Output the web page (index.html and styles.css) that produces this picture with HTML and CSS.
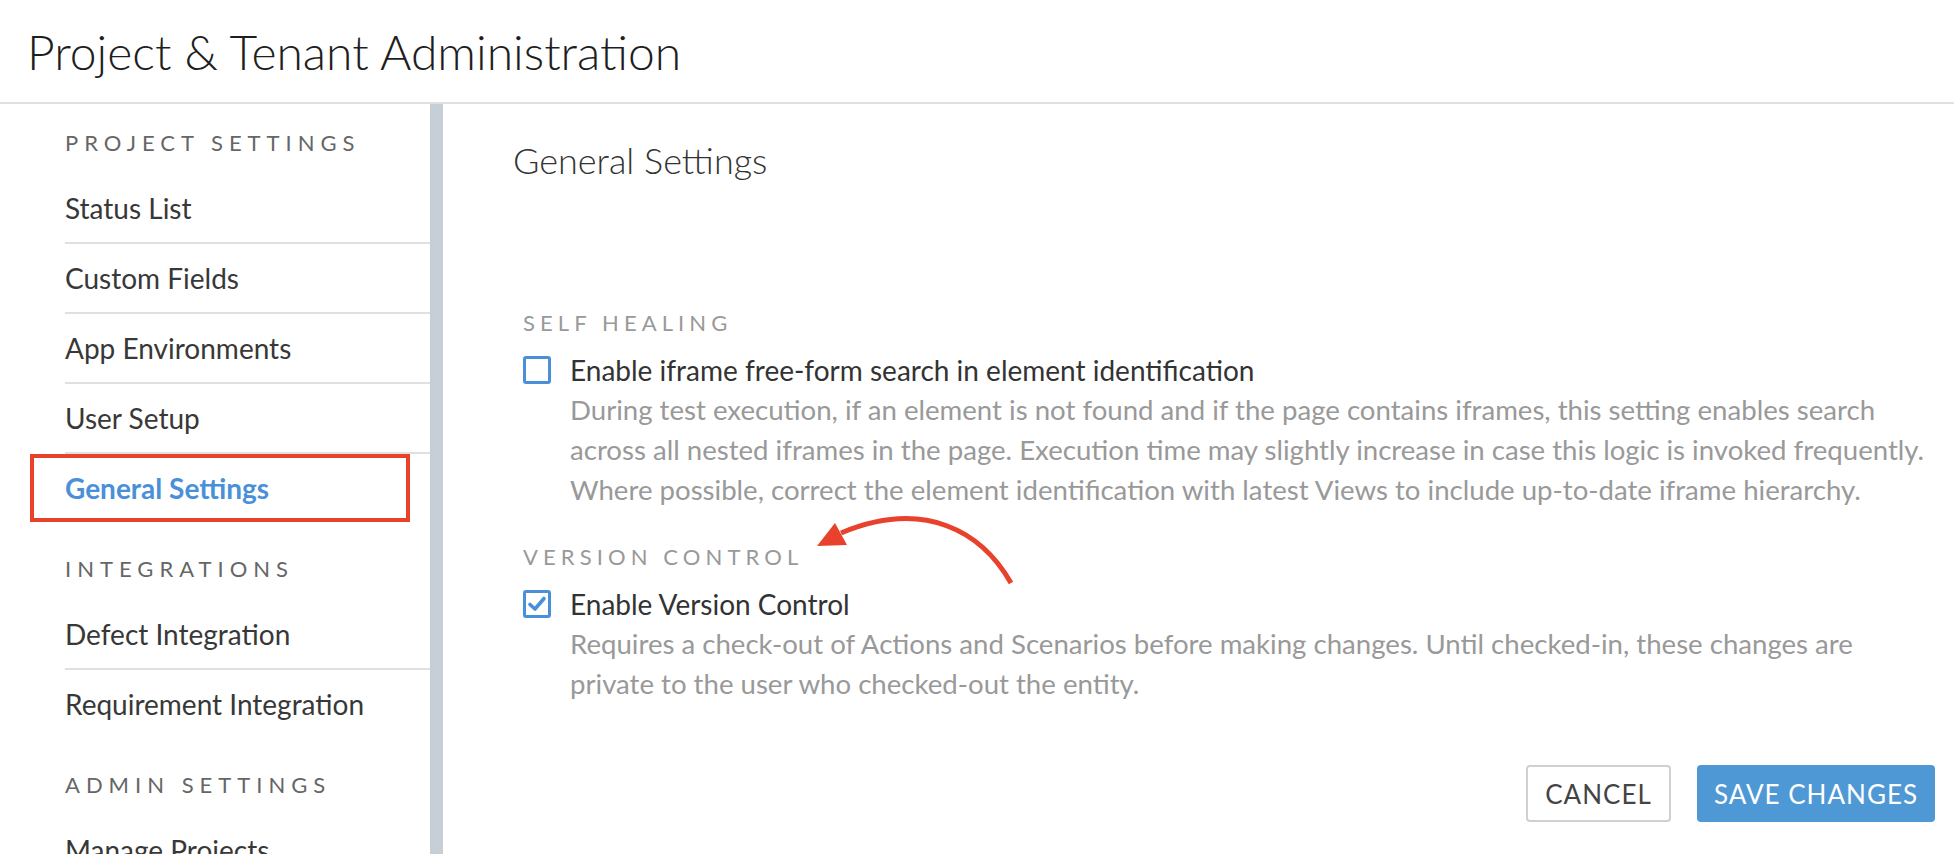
FILE: index.html
```html
<!DOCTYPE html>
<html lang="en">
<head>
  <meta charset="UTF-8">
  <title>Project &amp; Tenant Administration</title>
  <link rel="stylesheet" href="styles.css">
</head>
<body>
  <header class="page-header">
    <h1>Project &amp; Tenant Administration</h1>
  </header>

  <div class="layout">
    <aside class="sidebar">
      <div class="group">
        <div class="group-title">PROJECT SETTINGS</div>
        <a class="side-item" href="#status">Status List</a>
        <a class="side-item" href="#fields">Custom Fields</a>
        <a class="side-item" href="#env">App Environments</a>
        <a class="side-item" href="#users">User Setup</a>
        <a class="side-item active" href="#general">General Settings</a>
      </div>
      <div class="group">
        <div class="group-title">INTEGRATIONS</div>
        <a class="side-item" href="#defect">Defect Integration</a>
        <a class="side-item" href="#req">Requirement Integration</a>
      </div>
      <div class="group">
        <div class="group-title">ADMIN SETTINGS</div>
        <a class="side-item" href="#projects">Manage Projects</a>
      </div>
    </aside>

    <main class="content">
      <h2>General Settings</h2>

      <section class="setting first">
        <div class="setting-title">SELF HEALING</div>
        <label class="check-row">
          <span class="checkbox"></span>
          <span class="check-label">Enable iframe free-form search in element identification</span>
        </label>
        <p class="desc">During test execution, if an element is not found and if the page contains iframes, this setting enables search across all nested iframes in the page. Execution time may slightly increase in case this logic is invoked frequently. Where possible, correct the element identification with latest Views to include up-to-date iframe hierarchy.</p>
      </section>

      <section class="setting">
        <div class="setting-title">VERSION CONTROL</div>
        <label class="check-row">
          <span class="checkbox checked">
            <svg viewBox="0 0 20 20" width="20" height="20"><path d="M3 10.5 L8 15 L17 4.5" fill="none" stroke="#4a90d9" stroke-width="3.6" stroke-linecap="round" stroke-linejoin="round"/></svg>
          </span>
          <span class="check-label">Enable Version Control</span>
        </label>
        <p class="desc">Requires a check-out of Actions and Scenarios before making changes. Until checked-in, these changes are private to the user who checked-out the entity.</p>
      </section>

      <div class="actions">
        <button class="btn btn-cancel">CANCEL</button>
        <button class="btn btn-save">SAVE CHANGES</button>
      </div>

      <!-- annotation arrow -->
      <svg class="arrow" viewBox="813 514 210 80" width="210" height="80">
        <path d="M1011 583 C 982 532, 925 498, 841 533" fill="none" stroke="#e8412c" stroke-width="5"/>
        <polygon points="835,523 817,546 847,545" fill="#e8412c"/>
      </svg>
    </main>
  </div>
</body>
</html>
```

FILE: styles.css
```css
body {
  margin: 0;
  font-family: Lato, "Open Sans", Arial, sans-serif;
  background: #fff;
  color: #333;
  overflow: hidden;
}

.page-header {
  height: 102px;
  border-bottom: 2px solid #e0e0e0;
  display: flex;
  align-items: center;
  padding-left: 27px;
}

.page-header h1 {
  margin: 0;
  font-size: 48px;
  font-weight: 300;
  color: #1e1e1e;
}

.layout {
  display: flex;
  height: 750px;
}

.sidebar {
  width: 365px;
  padding-left: 65px;
  border-right: 13px solid #c7cfd6;
  flex-shrink: 0;
}

.group + .group {
  margin-top: 8px;
}

.group-title {
  padding: 19px 0 11px;
  line-height: 40px;
  font-size: 22px;
  letter-spacing: 6px;
  color: #666;
}

.side-item {
  display: flex;
  align-items: center;
  height: 68px;
  border-bottom: 2px solid #e0e0e0;
  font-size: 28px;
  color: #383838;
  text-decoration: none;
}

.group .side-item:last-child {
  border-bottom: none;
}

.side-item.active {
  position: relative;
  color: #4a90d9;
  font-weight: bold;
}

.side-item.active::after {
  content: "";
  position: absolute;
  left: -35px;
  right: 20px;
  top: 0;
  bottom: 0;
  border: 4px solid #e8412c;
}

.content {
  position: relative;
  flex: 1;
  padding: 36px 19px 0 70px;
}

.content h2 {
  margin: 0;
  font-size: 36px;
  font-weight: 300;
  line-height: 40px;
  color: #333;
}

.setting {
  padding-left: 10px;
  margin-top: 32px;
}

.setting.first {
  margin-top: 128px;
}

.setting-title {
  font-size: 22px;
  line-height: 30px;
  letter-spacing: 5.1px;
  color: #999;
}

.check-row {
  display: flex;
  align-items: center;
  margin-top: 16px;
  line-height: 32px;
}

.checkbox {
  width: 22px;
  height: 22px;
  border: 3px solid #4a90d9;
  border-radius: 3px;
  margin-right: 19px;
  display: flex;
  align-items: center;
  justify-content: center;
  flex-shrink: 0;
}

.check-label {
  font-size: 28px;
  color: #333;
}

.desc {
  max-width: 1356px;
  margin: 4px 0 0 47px;
  font-size: 27.6px;
  line-height: 40px;
  color: #999;
}

.actions {
  display: flex;
  justify-content: flex-end;
  gap: 26px;
  margin-top: 61px;
}

.btn {
  height: 57px;
  font-family: Lato, Arial, sans-serif;
  font-size: 26px;
  letter-spacing: 1px;
  border-radius: 4px;
  cursor: pointer;
}

.btn-cancel {
  width: 145px;
  background: #fff;
  color: #444;
  border: 2px solid #d0d0d0;
}

.btn-save {
  width: 238px;
  background: #4f98d6;
  color: #fff;
  border: none;
}

.arrow {
  position: absolute;
  left: 370px;
  top: 410px;
}
```
